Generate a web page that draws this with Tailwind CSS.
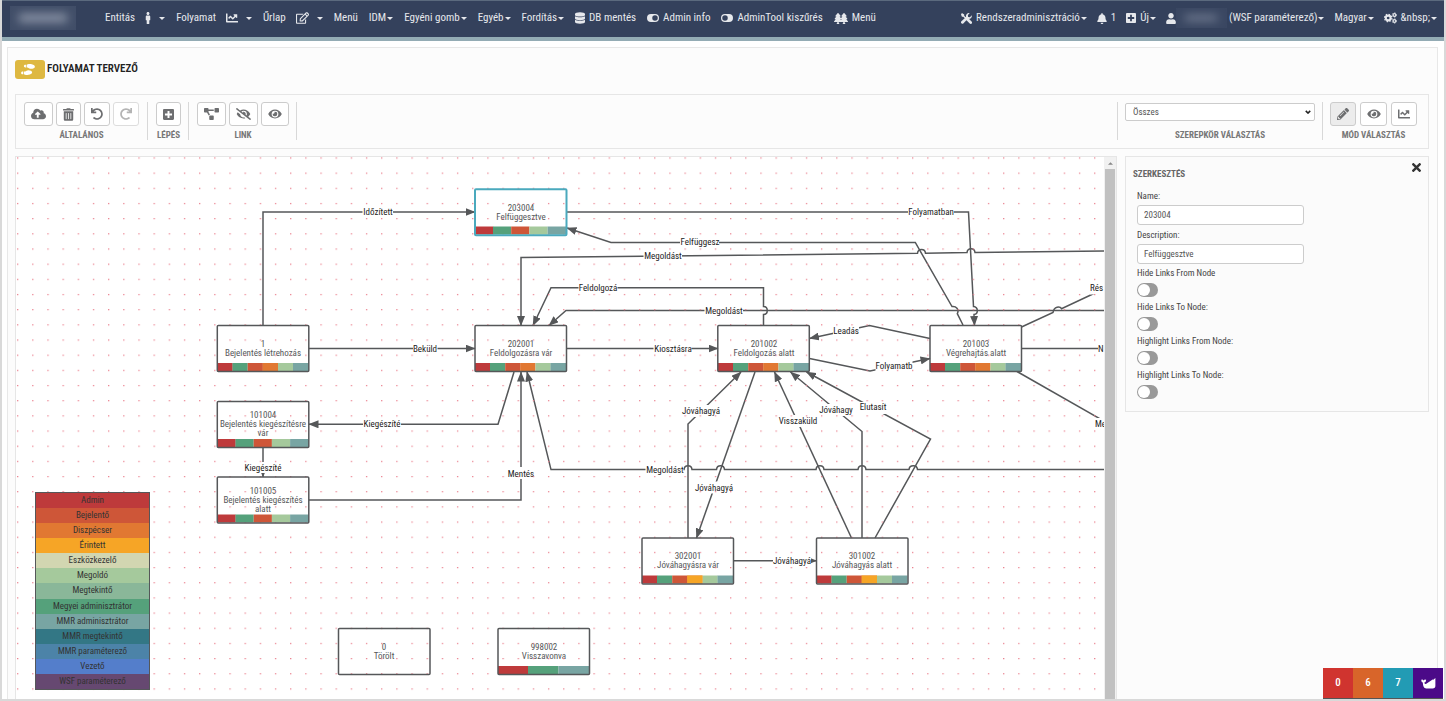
<!DOCTYPE html>
<html lang="hu">
<head>
<meta charset="utf-8">
<title>Folyamat tervező</title>
<script src="https://cdn.jsdelivr.net/npm/@tailwindcss/browser@4"></script>
</head>
<body class="flex h-screen flex-col overflow-hidden border-x-2 border-b-2 border-[#d9d9d9] bg-white font-['Roboto_Condensed','Liberation_Sans_Narrow',Roboto,sans-serif] text-[#555]">

<!-- Shared icon shapes -->
<svg class="hidden" aria-hidden="true">
  <symbol id="i-cloud" viewBox="0 0 640 512"><path d="M537.6 226.6c4.1-10.7 6.4-22.4 6.4-34.6 0-53-43-96-96-96-19.7 0-38.1 6-53.3 16.2C367 64.2 315.3 32 256 32c-88.4 0-160 71.6-160 160 0 2.7.1 5.4.2 8.1C40.2 219.8 0 273.2 0 336c0 79.5 64.5 144 144 144h368c70.7 0 128-57.3 128-128 0-61.9-44-113.6-102.4-125.4zM393.4 288H328v112c0 8.8-7.2 16-16 16h-48c-8.8 0-16-7.2-16-16V288h-65.4c-14.3 0-21.4-17.2-11.3-27.3l105.4-105.4c6.2-6.2 16.4-6.2 22.6 0l105.4 105.4c10.1 10.1 2.9 27.3-11.3 27.3z"/></symbol>
  <symbol id="i-trash" viewBox="0 0 448 512"><path d="M32 464a48 48 0 0 0 48 48h288a48 48 0 0 0 48-48V128H32zm272-256a16 16 0 0 1 32 0v224a16 16 0 0 1-32 0zm-96 0a16 16 0 0 1 32 0v224a16 16 0 0 1-32 0zm-96 0a16 16 0 0 1 32 0v224a16 16 0 0 1-32 0zM432 32H312l-9.4-18.7A24 24 0 0 0 281.1 0H166.8a23.72 23.72 0 0 0-21.4 13.3L136 32H16A16 16 0 0 0 0 48v32a16 16 0 0 0 16 16h416a16 16 0 0 0 16-16V48a16 16 0 0 0-16-16z"/></symbol>
  <symbol id="i-undo" viewBox="0 0 512 512"><path d="M212.333 224.333H12c-6.627 0-12-5.373-12-12V12C0 5.373 5.373 0 12 0h48c6.627 0 12 5.373 12 12v78.112C117.773 39.279 184.26 7.47 258.175 8.007c136.906.994 246.448 111.623 246.157 248.532C504.041 393.258 393.12 504 256.333 504c-64.089 0-122.496-24.313-166.51-64.215-5.099-4.622-5.334-12.554-.467-17.42l33.967-33.967c4.474-4.474 11.662-4.717 16.401-.525C170.76 415.336 211.58 432 256.333 432c97.268 0 176-78.716 176-176 0-97.267-78.716-176-176-176-58.496 0-110.28 28.476-142.274 72.333h98.274c6.627 0 12 5.373 12 12v48c0 6.627-5.373 12-12 12z"/></symbol>
  <symbol id="i-plus" viewBox="0 0 448 512"><path d="M400 32H48C21.5 32 0 53.5 0 80v352c0 26.5 21.5 48 48 48h352c26.5 0 48-21.5 48-48V80c0-26.5-21.5-48-48-48zm-32 252c0 6.6-5.4 12-12 12h-92v92c0 6.6-5.4 12-12 12h-56c-6.6 0-12-5.4-12-12v-92H92c-6.6 0-12-5.4-12-12v-56c0-6.6 5.4-12 12-12h92v-92c0-6.6 5.4-12 12-12h56c6.6 0 12 5.4 12 12v92h92c6.6 0 12 5.4 12 12v56z"/></symbol>
  <symbol id="i-diagram" viewBox="0 0 640 512"><path d="M384 320H256c-17.67 0-32 14.33-32 32v128c0 17.67 14.33 32 32 32h128c17.67 0 32-14.33 32-32V352c0-17.67-14.33-32-32-32zM192 32c0-17.67-14.33-32-32-32H32C14.33 0 0 14.33 0 32v128c0 17.67 14.33 32 32 32h95.72l73.16 128.04C211.98 300.98 232.4 288 256 288h.28L192 175.51V128h224V64H192V32zM608 0H480c-17.67 0-32 14.33-32 32v128c0 17.67 14.33 32 32 32h128c17.67 0 32-14.33 32-32V32c0-17.67-14.33-32-32-32z"/></symbol>
  <symbol id="i-eye" viewBox="0 0 576 512"><path d="M572.52 241.4C518.29 135.59 410.93 64 288 64S57.68 135.64 3.48 241.41a32.35 32.35 0 0 0 0 29.19C57.71 376.41 165.07 448 288 448s230.32-71.64 284.52-177.41a32.35 32.35 0 0 0 0-29.19zM288 400a144 144 0 1 1 144-144 143.93 143.93 0 0 1-144 144zm0-240a95.31 95.31 0 0 0-25.31 3.79 47.85 47.85 0 0 1-66.9 66.9A95.78 95.78 0 1 0 288 160z"/></symbol>
  <symbol id="i-eye-slash" viewBox="0 0 640 512"><path d="M320 400c-75.85 0-137.25-58.71-142.9-133.11L72.2 185.82c-13.79 17.3-26.48 35.59-36.72 55.59a32.35 32.35 0 0 0 0 29.19C89.71 376.41 197.07 448 320 448c26.91 0 52.87-4 77.89-10.46L346 397.39a144.13 144.13 0 0 1-26 2.61zm313.82 58.1l-110.55-85.44a331.25 331.25 0 0 0 81.25-102.07 32.35 32.35 0 0 0 0-29.19C550.29 135.59 442.93 64 320 64a308.15 308.15 0 0 0-147.32 37.7L45.46 3.37A16 16 0 0 0 23 6.18L3.37 31.45A16 16 0 0 0 6.18 53.9l588.36 454.73a16 16 0 0 0 22.46-2.81l19.64-25.27a16 16 0 0 0-2.82-22.45zm-183.72-142l-39.3-30.38A94.75 94.75 0 0 0 416 256a94.76 94.76 0 0 0-121.31-92.21A47.65 47.65 0 0 1 304 192a46.64 46.64 0 0 1-1.54 10l-73.61-56.89A142.31 142.31 0 0 1 320 112a143.92 143.92 0 0 1 144 144c0 21.63-5.29 41.79-13.9 60.11z"/></symbol>
  <symbol id="i-pencil" viewBox="0 0 512 512"><path d="M497.9 142.1l-46.1 46.1c-4.7 4.7-12.3 4.7-17 0l-111-111c-4.7-4.7-4.7-12.3 0-17l46.1-46.1c18.7-18.7 49.1-18.7 67.9 0l60.1 60.1c18.8 18.7 18.8 49.1 0 67.9zM284.2 99.8L21.6 362.4.4 483.9c-2.9 16.4 11.4 30.6 27.8 27.8l121.5-21.3 262.6-262.6c4.7-4.7 4.7-12.3 0-17l-111-111c-4.8-4.7-12.4-4.7-17.1 0zM124.1 339.9c-5.5-5.5-5.5-14.3 0-19.8l154-154c5.5-5.5 14.3-5.5 19.8 0s5.5 14.3 0 19.8l-154 154c-5.5 5.5-14.3 5.5-19.8 0zM88 424h48v36.3l-64.5 11.3-31.1-31.1L51.7 376H88v48z"/></symbol>
  <symbol id="i-chart" viewBox="0 0 512 512"><path d="M496 384H64V80c0-8.84-7.16-16-16-16H16C7.16 64 0 71.16 0 80v336c0 17.67 14.33 32 32 32h464c8.84 0 16-7.16 16-16v-32c0-8.84-7.16-16-16-16zM464 96H345.94c-21.38 0-32.09 25.85-16.97 40.97l32.4 32.4L288 242.75l-73.37-73.37c-12.5-12.5-32.76-12.5-45.25 0l-68.69 68.69c-6.25 6.25-6.25 16.38 0 22.63l22.62 22.62c6.25 6.25 16.38 6.25 22.63 0L192 237.25l73.37 73.37c12.5 12.5 32.76 12.5 45.25 0l96-96 32.4 32.4c15.12 15.12 40.97 4.41 40.97-16.97V112c.01-8.84-7.15-16-15.99-16z"/></symbol>
  <symbol id="i-times" viewBox="0 80 352 352"><path d="M242.72 256l100.07-100.07c12.28-12.28 12.28-32.19 0-44.48l-22.24-22.24c-12.28-12.28-32.19-12.28-44.48 0L176 189.28 75.93 89.21c-12.28-12.28-32.19-12.28-44.48 0L9.21 111.45c-12.28 12.28-12.28 32.19 0 44.48L109.28 256 9.21 356.07c-12.28 12.28-12.28 32.19 0 44.48l22.24 22.24c12.28 12.28 32.2 12.28 44.48 0L176 322.72l100.07 100.07c12.28 12.28 32.2 12.28 44.48 0l22.24-22.24c12.28-12.28 12.28-32.19 0-44.48L242.72 256z"/></symbol>
  <symbol id="i-male" viewBox="0 0 192 512"><path d="M96 0c35.346 0 64 28.654 64 64s-28.654 64-64 64-64-28.654-64-64S60.654 0 96 0m48 144h-11.36c-22.711 10.443-49.59 10.894-73.28 0H48c-26.51 0-48 21.49-48 48v136c0 13.255 10.745 24 24 24h16v136c0 13.255 10.745 24 24 24h64c13.255 0 24-10.745 24-24V352h16c13.255 0 24-10.745 24-24V192c0-26.51-21.49-48-48-48z"/></symbol>
  <symbol id="i-edit" viewBox="0 0 576 512"><path d="M402.3 344.9l32-32c5-5 13.7-1.5 13.7 5.7V464c0 26.5-21.5 48-48 48H48c-26.5 0-48-21.5-48-48V112c0-26.5 21.5-48 48-48h273.5c7.1 0 10.7 8.6 5.7 13.7l-32 32c-1.5 1.5-3.5 2.3-5.7 2.3H48v352h352V350.5c0-2.1.8-4.1 2.3-5.6zm156.6-201.8L296.3 405.7l-90.4 10c-26.2 2.9-48.5-19.2-45.6-45.6l10-90.4L432.9 17.1c22.9-22.9 59.9-22.9 82.7 0l43.2 43.2c22.9 22.9 22.9 60 .1 82.8zM460.1 174L402 115.9 216.2 301.8l-7.3 65.3 65.3-7.3L460.1 174zm64.8-79.7l-43.2-43.2c-4.1-4.1-10.8-4.1-14.8 0L436 82l58.1 58.1 30.9-30.9c4-4.2 4-10.8-.1-14.9z"/></symbol>
  <symbol id="i-db" viewBox="0 0 448 512"><path d="M448 73.143v45.714C448 159.143 347.667 192 224 192S0 159.143 0 118.857V73.143C0 32.857 100.333 0 224 0s224 32.857 224 73.143zM448 176v102.857C448 319.143 347.667 352 224 352S0 319.143 0 278.857V176c48.125 33.143 136.208 48.572 224 48.572S399.874 209.143 448 176zm0 160v102.857C448 479.143 347.667 512 224 512S0 479.143 0 438.857V336c48.125 33.143 136.208 48.572 224 48.572S399.874 369.143 448 336z"/></symbol>
  <symbol id="i-toggle" viewBox="0 0 24 16"><path fill-rule="evenodd" d="M8 0h8a8 8 0 0 1 0 16H8A8 8 0 0 1 8 0zm8 2.5a5.5 5.5 0 1 0 0 11 5.5 5.5 0 0 0 0-11z"/></symbol>
  <symbol id="i-tree" viewBox="0 0 384 512" preserveAspectRatio="none"><path d="M378.31 378.49L298.42 288h30.63c9.01 0 16.98-5 20.78-13.06 3.8-8.04 2.55-17.26-3.28-24.05L268.42 160h28.89c9.1 0 17.3-5.35 20.86-13.61 3.52-8.13 1.86-17.59-4.24-24.08L203.66 4.83c-6.03-6.45-17.28-6.45-23.32 0L70.06 122.31c-6.1 6.49-7.75 15.95-4.24 24.08C69.38 154.65 77.59 160 86.69 160h28.89l-78.14 90.91c-5.81 6.78-7.06 15.99-3.27 24.04C37.97 283 45.93 288 54.95 288h30.63L5.69 378.49c-6 6.79-7.36 16.09-3.56 24.26 3.75 8.05 12 13.25 21.01 13.25H160v24.45l-30.29 48.4c-5.32 10.64 2.42 23.16 14.31 23.16h95.96c11.89 0 19.63-12.52 14.31-23.16L224 440.45V416h136.86c9.01 0 17.26-5.2 21.01-13.25 3.8-8.17 2.44-17.47-3.56-24.26z"/></symbol>
  <symbol id="i-bell" viewBox="0 0 448 512"><path d="M224 512c35.32 0 63.97-28.65 63.97-64H160.03c0 35.35 28.65 64 63.97 64zm215.39-149.71c-19.32-20.76-55.47-51.99-55.47-154.29 0-77.7-54.48-139.9-127.94-155.16V32c0-17.67-14.32-32-31.98-32s-31.98 14.33-31.98 32v20.84C118.56 68.1 64.08 130.3 64.08 208c0 102.3-36.15 133.53-55.47 154.29-6 6.45-8.66 14.16-8.61 21.71.11 16.4 12.98 32 32.1 32h383.8c19.12 0 32-15.6 32.1-32 .05-7.55-2.61-15.27-8.61-21.71z"/></symbol>
  <symbol id="i-user" viewBox="0 0 448 512"><path d="M224 256c70.7 0 128-57.3 128-128S294.7 0 224 0 96 57.3 96 128s57.3 128 128 128zm89.6 32h-16.7c-22.2 10.2-46.9 16-72.9 16s-50.6-5.8-72.9-16h-16.7C60.2 288 0 348.2 0 422.4V464c0 26.5 21.5 48 48 48h352c26.5 0 48-21.5 48-48v-41.6c0-74.2-60.2-134.4-134.4-134.4z"/></symbol>
  <symbol id="i-shoe" viewBox="0 0 640 512"><path d="M192 160h32V32h-32c-35.35 0-64 28.65-64 64s28.65 64 64 64zM0 416c0 35.35 28.65 64 64 64h32V352H64c-35.35 0-64 28.65-64 64zm337.46-128c-34.91 0-76.16 13.12-104.73 32-24.79 16.38-44.52 32-104.73 32v128l57.53 15.97c26.21 7.28 53.01 13.12 80.31 15.05 32.69 2.31 65.6.67 97.58-6.2C472.9 481.3 512 429.22 512 384c0-64-84.18-96-174.54-96zM491.42 7.25C459.44.38 426.53-1.26 393.84 1.05c-27.3 1.93-54.1 7.77-80.31 15.04L256 32v128c60.2 0 79.94 15.62 104.73 32 28.57 18.88 69.82 32 104.73 32C555.82 224 640 192 640 128c0-45.22-39.1-97.3-148.58-120.75z"/></symbol>
  <symbol id="i-tools" viewBox="0 0 24 24"><path d="M2 0l5 3v3l4.500 4.500-2 2L5 8H2L0 3zM13 13l3-1.500 7 7a2.800 2.800 0 0 1-4 4.500l-7-7zM23.500 5a6.500 6.500 0 0 1-8.500 7.500L5.500 22.500a3 3 0 0 1-4.500-4.500L11 8.500A6.500 6.500 0 0 1 19 .5l-4 4 .5 4 4 .5z"/></symbol>
  <symbol id="i-cogs" viewBox="0 0 28 24"><g fill="none" stroke="currentColor"><circle cx="9" cy="12" r="5.200" stroke-width="4.500"/><circle cx="9" cy="12" r="8" stroke-width="2.600" stroke-dasharray="3.140 3.140"/><circle cx="22.500" cy="5.500" r="3" stroke-width="2.600"/><circle cx="22.500" cy="5.500" r="4.800" stroke-width="1.600" stroke-dasharray="2.510 2.510"/><circle cx="22.500" cy="18.500" r="3" stroke-width="2.600"/><circle cx="22.500" cy="18.500" r="4.800" stroke-width="1.600" stroke-dasharray="2.510 2.510"/></g></symbol>
  <symbol id="i-whale" viewBox="0 0 16 12"><path d="M0 2l1.500-.3L2.700 2.700 3.900 1.700 5.500 2 4.800 4.300 3.500 5C3.500 6 4 6.800 5.200 6.500L12.500 1.500 13.300 2 15.500 0v8.500A3 3 0 0 1 12.500 11.500H5.500C3 11.500 2 9 1.800 5L.6 4.300z"/></symbol>
  <symbol id="i-caret" viewBox="0 0 6 3"><path d="M0 0h6L3 3z"/></symbol>
</svg>

<header class="flex h-[41px] shrink-0 items-center justify-between border-t border-b-4 border-t-[#5b6a7e] border-b-[#93abb4] bg-[#34415c] pr-[7px] pb-0.5 text-[11px] whitespace-nowrap text-[#e6e8ec]">
  <nav class="flex items-center gap-[11px]" aria-label="Főmenü">
    <a href="#" aria-label="Kezdőlap" class="mr-[18px] ml-2 flex h-6 w-[66px] items-center justify-center overflow-hidden bg-[#414e68]"><span class="h-2 w-12 bg-[#8f98aa] blur-[5px]"></span></a>
    <a href="#" class="flex items-center">Entitás<svg class="ml-[10px] h-[12px] w-[6px] fill-current"><use href="#i-male"/></svg><svg class="ml-2 h-[3px] w-[6px] fill-current"><use href="#i-caret"/></svg></a>
    <a href="#" class="flex items-center">Folyamat<svg class="ml-[10px] size-[12px] fill-current"><use href="#i-chart"/></svg><svg class="ml-2 h-[3px] w-[6px] fill-current"><use href="#i-caret"/></svg></a>
    <a href="#" class="flex items-center">Űrlap<svg class="ml-[10px] h-[12px] w-[13px] fill-current"><use href="#i-edit"/></svg><svg class="ml-2 h-[3px] w-[6px] fill-current"><use href="#i-caret"/></svg></a>
    <a href="#">Menü</a>
    <a href="#" class="flex items-center gap-px">IDM<svg class="h-[3px] w-[6px] fill-current"><use href="#i-caret"/></svg></a>
    <a href="#" class="flex items-center gap-px">Egyéni gomb<svg class="h-[3px] w-[6px] fill-current"><use href="#i-caret"/></svg></a>
    <a href="#" class="flex items-center gap-px">Egyéb<svg class="h-[3px] w-[6px] fill-current"><use href="#i-caret"/></svg></a>
    <a href="#" class="flex items-center gap-px">Fordítás<svg class="h-[3px] w-[6px] fill-current"><use href="#i-caret"/></svg></a>
    <a href="#" class="flex items-center gap-1"><svg class="h-[12px] w-[10px] fill-current"><use href="#i-db"/></svg>DB mentés</a>
    <a href="#" class="flex items-center gap-1"><svg class="h-[8px] w-[12px] fill-current"><use href="#i-toggle"/></svg>Admin info</a>
    <a href="#" class="flex items-center gap-1"><svg class="h-[8px] w-[12px] fill-current" viewBox="0 0 24 16"><path fill-rule="evenodd" d="M8 0h8a8 8 0 0 1 0 16H8A8 8 0 0 1 8 0zm0 2.500a5.500 5.500 0 1 0 0 11 5.500 5.500 0 0 0 0-11z"/></svg>AdminTool kiszűrés</a>
    <a href="#" class="flex items-center gap-1"><svg class="h-[11px] w-[14px] fill-current" viewBox="0 0 14 11"><use href="#i-tree" width="8" height="11"/><use href="#i-tree" x="6" width="8" height="11"/></svg>Menü</a>
  </nav>
  <nav class="flex items-center gap-[10px]" aria-label="Felhasználói menü">
    <a href="#" class="flex items-center"><svg class="mr-1 size-[11px] fill-current"><use href="#i-tools"/></svg>Rendszeradminisztráció<svg class="ml-px h-[3px] w-[6px] fill-current"><use href="#i-caret"/></svg></a>
    <a href="#" class="flex items-center gap-1"><svg class="h-[11px] w-[10px] fill-current"><use href="#i-bell"/></svg>1</a>
    <a href="#" class="flex items-center"><svg class="mr-1 h-[12px] w-[10px] fill-current"><use href="#i-plus"/></svg>Új<svg class="ml-px h-[3px] w-[6px] fill-current"><use href="#i-caret"/></svg></a>
    <a href="#" class="flex items-center"><svg class="h-[11px] w-[10px] fill-current"><use href="#i-user"/></svg><span class="mr-0.5 flex h-5 w-[51px] items-center justify-center overflow-hidden bg-[#3a4762]"><span class="h-1 w-8 bg-[#8f98aa] blur-[5px]"></span></span>(WSF paraméterező)<svg class="ml-px h-[3px] w-[6px] fill-current"><use href="#i-caret"/></svg></a>
    <a href="#" class="flex items-center gap-px">Magyar<svg class="h-[3px] w-[6px] fill-current"><use href="#i-caret"/></svg></a>
    <a href="#" class="flex items-center"><svg class="mr-1 h-[12px] w-[13px] fill-current"><use href="#i-cogs"/></svg>&amp;nbsp;<svg class="ml-px h-[3px] w-[6px] fill-current"><use href="#i-caret"/></svg></a>
  </nav>
</header>

<main class="mr-[6px] ml-[5px] mt-1.5 flex min-h-0 flex-1 flex-col border border-b-0 border-[#e8e8e8] bg-[#fcfcfc] pr-2 pl-[7px] pt-[11px]">
  <h1 class="flex h-5 items-center gap-0.5 text-[11px] font-semibold text-[#222]">
    <span class="flex h-[19px] w-[30px] items-center rounded-[3px] bg-[#deb841] pl-[6px]"><svg class="h-[11px] w-[14px] fill-white"><use href="#i-shoe"/></svg></span>FOLYAMAT TERVEZŐ
  </h1>

  <div class="mt-[15px] flex h-[55px] shrink-0 items-start justify-between border border-[#e6e6e6] py-[7px] pr-[11px] pl-2 text-[9px] font-bold text-[#777]">
    <div class="flex">
      <div class="flex h-[38px] flex-col items-center justify-between border-r border-[#d8d8d8] pr-2">
        <div class="flex gap-[3px]">
          <button aria-label="Mentés" class="flex h-6 w-[29px] items-center justify-center rounded-[3px] border border-[#ccc] bg-white"><svg class="h-[12px] w-[15px] fill-[#6d6e70]"><use href="#i-cloud"/></svg></button>
          <button aria-label="Törlés" class="flex h-6 w-[25px] items-center justify-center rounded-[3px] border border-[#ccc] bg-white"><svg class="h-[13px] w-[11px] fill-[#6d6e70]"><use href="#i-trash"/></svg></button>
          <button aria-label="Visszavonás" class="flex h-6 w-[26px] items-center justify-center rounded-[3px] border border-[#ccc] bg-white"><svg class="size-[12px] fill-[#6d6e70]"><use href="#i-undo"/></svg></button>
          <button aria-label="Mégis" disabled class="flex h-6 w-[26px] items-center justify-center rounded-[3px] border border-[#ddd] bg-white"><svg class="size-[12px] -scale-x-100 fill-[#b4b4b4]"><use href="#i-undo"/></svg></button>
        </div>
        <span class="leading-[10px]">ÁLTALÁNOS</span>
      </div>
      <div class="flex h-[38px] flex-col items-center justify-between border-r border-[#d8d8d8] pr-[7px] pl-2">
        <button aria-label="Új lépés" class="flex h-6 w-[25px] items-center justify-center rounded-[3px] border border-[#ccc] bg-white"><svg class="h-[13px] w-[11px] fill-[#6d6e70]"><use href="#i-plus"/></svg></button>
        <span class="leading-[10px]">LÉPÉS</span>
      </div>
      <div class="flex h-[38px] flex-col items-center justify-between border-r border-[#d8d8d8] pr-[7px] pl-2">
        <div class="flex gap-[3px]">
          <button aria-label="Linkek" class="flex h-6 w-[29px] items-center justify-center rounded-[3px] border border-[#ccc] bg-white"><svg class="h-[12px] w-[15px] fill-[#6d6e70]"><use href="#i-diagram"/></svg></button>
          <button aria-label="Linkek elrejtése" class="flex h-6 w-[29px] items-center justify-center rounded-[3px] border border-[#ccc] bg-white"><svg class="h-[12px] w-[15px] fill-[#6d6e70]"><use href="#i-eye-slash"/></svg></button>
          <button aria-label="Linkek mutatása" class="flex h-6 w-[28px] items-center justify-center rounded-[3px] border border-[#ccc] bg-white"><svg class="h-[12px] w-[14px] fill-[#6d6e70]"><use href="#i-eye"/></svg></button>
        </div>
        <span class="leading-[10px]">LINK</span>
      </div>
    </div>
    <div class="flex">
      <div class="flex h-[38px] flex-col items-center justify-between border-l border-[#d8d8d8] px-[7px]">
        <div class="relative mt-px">
          <select id="role" class="h-[18px] w-[190px] appearance-none rounded-[2px] border border-[#ccc] bg-white px-[7px] text-[9px] leading-[16px] font-normal text-[#555]"><option>Összes</option></select>
          <svg class="pointer-events-none absolute top-[7px] right-1 h-[4px] w-[6px] fill-none stroke-[#222] stroke-2" viewBox="0 0 8 5"><path d="M1 1l3 3 3-3"/></svg>
        </div>
        <label for="role" class="leading-[10px]">SZEREPKÖR VÁLASZTÁS</label>
      </div>
      <div class="flex h-[38px] flex-col items-center justify-between border-l border-[#d8d8d8] pl-[7px]">
        <div class="flex gap-1">
          <button aria-label="Szerkesztés mód" aria-pressed="true" class="flex h-6 w-[26px] items-center justify-center rounded-[3px] border border-[#ccc] bg-[#ececec]"><svg class="size-[12px] fill-[#6d6e70]"><use href="#i-pencil"/></svg></button>
          <button aria-label="Megtekintés mód" class="flex h-6 w-[27px] items-center justify-center rounded-[3px] border border-[#ccc] bg-white"><svg class="h-[12px] w-[14px] fill-[#6d6e70]"><use href="#i-eye"/></svg></button>
          <button aria-label="Statisztika mód" class="flex h-6 w-[26px] items-center justify-center rounded-[3px] border border-[#ccc] bg-white"><svg class="size-[12px] fill-[#6d6e70]"><use href="#i-chart"/></svg></button>
        </div>
        <span class="leading-[10px]">MÓD VÁLASZTÁS</span>
      </div>
    </div>
  </div>

  <div class="mt-[7px] flex min-h-0 flex-1 items-start gap-2">
    <section aria-label="Folyamatábra" class="flex h-full min-w-0 flex-1 overflow-hidden border border-b-0 border-[#e6e6e6] bg-white">
      <div class="relative h-full min-w-0 flex-1 overflow-hidden">
        <svg class="absolute inset-0 h-full w-full">
          <defs>
            <pattern id="dots" width="15.170" height="15.170" patternUnits="userSpaceOnUse" x="17" y="157.400"><rect width="1.300" height="1.200" fill="#ea7f8d"/></pattern>
            <marker id="arrow" markerUnits="userSpaceOnUse" markerWidth="10" markerHeight="8" refX="9.500" refY="4" orient="auto"><path d="M0 0L10 4 0 8z" fill="#555759"/></marker>
            <g id="s6"><path fill="#be3a3b" d="M0 37.500h15.200v8H0z"/><path fill="#55a17b" d="M15 37.500h15.200v8H15z"/><path fill="#ce5638" d="M30.200 37.500h15.200v8H30.200z"/><path fill="#e17832" d="M45.200 37.500h15.300v8H45.200z"/><path fill="#a5c99c" d="M60.500 37.500h15.200v8H60.500z"/><path fill="#78a5a3" d="M75.500 37.500H91v8H75.500z"/></g>
            <g id="s6y"><use href="#s6"/><path fill="#f6a526" d="M45.200 37.500h15.300v8H45.200z"/></g>
            <g id="s5"><path fill="#be3a3b" d="M0 37.500h18.200v8H0z"/><path fill="#55a17b" d="M18 37.500h18.200v8H18z"/><path fill="#ce5638" d="M36.200 37.500h18.200v8H36.200z"/><path fill="#a5c99c" d="M54.400 37.500h18.200v8H54.400z"/><path fill="#78a5a3" d="M72.600 37.500H91v8H72.600z"/></g>
            <g id="s3"><path fill="#be3a3b" d="M0 37.500h30v8H0z"/><path fill="#55a17b" d="M30 37.500h30.500v8H30z"/><path fill="#78a5a3" d="M60.500 37.500H91v8H60.500z"/></g>
            <rect id="box" width="91.500" height="46" rx="1"/>
          </defs>
          <!-- Diagram coordinates start at 16,157 -->
          <g transform="translate(-16 -157)">
            <g fill="none" stroke="#555759" stroke-width="1.500">
              <path marker-end="url(#arrow)" d="M263 325V212H475"/>
              <path marker-end="url(#arrow)" d="M567 212H968.500L973.500 306.500C978.500 307 978.500 314 974 314.500L974.500 325.500"/>
              <path marker-end="url(#arrow)" d="M963 325L957.300 313.700C959.500 309 956 306 952 306.500L915.300 242.500H611L567 228"/>
              <path marker-end="url(#arrow)" d="M1104 251L975 252.500C974.500 247.500 967.500 247.500 967 252.600L925.500 253.200C925 248.200 918 248.200 917.500 253.300L521 257.500V325.500"/>
              <path marker-end="url(#arrow)" d="M763.500 325V314.500C768.500 314.500 768.500 306.500 763.500 306.500V287.700H551L533 325.500"/>
              <path marker-end="url(#arrow)" d="M1104 310.500H566L549 325.500"/>
              <path marker-end="url(#arrow)" d="M309 348.500H475"/>
              <path marker-end="url(#arrow)" d="M567 348.500H718"/>
              <path marker-end="url(#arrow)" d="M930 338.500L869.500 325.500 809.500 338.500"/>
              <path marker-end="url(#arrow)" d="M809.500 358.500L870 371 930 358.500"/>
              <path d="M1021.500 327L1053 312.500C1054 306 1060 306 1061.500 308.700L1095 293"/>
              <path d="M1022 348.500H1104"/>
              <path d="M1017 371.500L1104 421"/>
              <path marker-end="url(#arrow)" d="M514 372L498 424.300H309"/>
              <path marker-end="url(#arrow)" d="M263 447.500V477"/>
              <path marker-end="url(#arrow)" d="M309 500H521V372"/>
              <path marker-end="url(#arrow)" d="M1104 469.600H917.500C917 464.600 909.500 464.600 909 469.600H866C865.500 464.600 858.500 464.600 858 469.600H824C823.500 464.600 816.500 464.600 816 469.600H724.500C724 464.600 717 464.600 716.500 469.600H692C691.500 464.600 684.500 464.600 684 469.600H551L527 372"/>
              <path marker-end="url(#arrow)" d="M688 538V424L741 372"/>
              <path marker-end="url(#arrow)" d="M755 372L696.500 538"/>
              <path marker-end="url(#arrow)" d="M734 560.700H816.500"/>
              <path marker-end="url(#arrow)" d="M851.500 538L774.500 372"/>
              <path marker-end="url(#arrow)" d="M862 538V431.500L790.500 372"/>
              <path marker-end="url(#arrow)" d="M875 538L930.500 439 806.500 372"/>
            </g>

            <!-- Gaps in the links behind their labels -->
            <path fill="#fff" d="M362.500 206h30.500v12h-30.500zM908 206h46v12h-46zM680 236.500h39v12h-39zM643.500 250h38.500v12h-38.500zM578.500 282h39v12h-39zM704.500 304.500h38.500v12h-38.500zM413 342.500h24.500v12H413zM653.500 342.500H691.500v12H653.500zM833 325.500h26v12h-26zM875.500 360h37v12h-37zM1090 282.500h20v12h-20zM1098 342.500h10v12h-10zM1095 418h10v12h-10zM363 418h38v12h-38zM245 462h36v11h-36zM507.500 467h27v12h-27zM645.500 463.500h38v12h-38zM682 405h38v12h-38zM695 481.500h38v12h-38zM773 554.500h38v12h-38zM778 415h39v12h-39zM819 404h34v12h-34zM859 402h27v12h-27z"/>
            <g class="fill-[#222] text-[9px]" text-anchor="middle">
              <text x="378" y="215">Időzített</text><text x="931" y="215">Folyamatban</text><text x="700" y="245">Felfüggesz</text>
              <text x="663" y="259">Megoldást</text><text x="598" y="291">Feldolgozá</text><text x="724" y="314">Megoldást</text>
              <text x="425" y="352">Beküld</text><text x="673" y="352">Kiosztásra</text><text x="846" y="334">Leadás</text>
              <text x="894" y="369">Folyamatb</text><text x="382" y="427">Kiegészíté</text><text x="263" y="471">Kiegészíté</text>
              <text x="521" y="477">Mentés</text><text x="665" y="473">Megoldást</text><text x="701" y="414">Jóváhagyá</text>
              <text x="714" y="491">Jóváhagyá</text><text x="792" y="564">Jóváhagyá</text><text x="798" y="424">Visszaküld</text>
              <text x="836" y="413">Jóváhagy</text><text x="873" y="410">Elutasít</text>
              <text x="1090" y="291" text-anchor="start">Rés</text><text x="1098" y="352" text-anchor="start">N</text><text x="1095" y="427" text-anchor="start">Me</text>
            </g>

            <g class="fill-[#555759] text-[9px]" text-anchor="middle">
              <text x="263" y="347">1</text><text x="263" y="356">Bejelentés létrehozás</text>
              <text x="521" y="211">203004</text><text x="521" y="220">Felfüggesztve</text>
              <text x="521" y="347">202001</text><text x="521" y="356">Feldolgozásra vár</text>
              <text x="764" y="347">201002</text><text x="764" y="356">Feldolgozás alatt</text>
              <text x="976" y="347">201003</text><text x="976" y="356">Végrehajtás alatt</text>
              <text x="263" y="418">101004</text><text x="263" y="427">Bejelentés kiegészítésre</text><text x="263" y="436">vár</text>
              <text x="263" y="494">101005</text><text x="263" y="503">Bejelentés kiegészítés</text><text x="263" y="512">alatt</text>
              <text x="688" y="559">302001</text><text x="688" y="568">Jóváhagyásra vár</text>
              <text x="862" y="559">301002</text><text x="862" y="568">Jóváhagyás alatt</text>
              <text x="384" y="650">0</text><text x="384" y="659">Törölt</text>
              <text x="544" y="650">998002</text><text x="544" y="659">Visszavonva</text>
            </g>
            <rect x="16" y="157" width="1088" height="560" fill="url(#dots)"/>
            <use href="#s6" x="217.500" y="325.500"/><use href="#s5" x="475" y="189"/><use href="#s6" x="475" y="325.500"/><use href="#s6" x="718" y="325.500"/><use href="#s6" x="930" y="325.500"/><use href="#s5" x="217.500" y="401.500"/><use href="#s5" x="217.500" y="477"/><use href="#s6y" x="642" y="538"/><use href="#s6y" x="816.500" y="538"/><use href="#s3" x="498" y="628.500"/>
            <g fill="none" stroke="#555759" stroke-width="1.500">
              <use href="#box" x="217.300" y="325.500"/><use href="#box" x="475" y="325.500"/><use href="#box" x="717.800" y="325.500"/><use href="#box" x="930" y="325.500"/><use href="#box" x="217.300" y="401.500"/><use href="#box" x="217.300" y="477"/><use href="#box" x="642" y="538"/><use href="#box" x="816.500" y="538"/><use href="#box" x="338.500" y="628.500"/><use href="#box" x="498" y="628.500"/>
            </g>
            <use href="#box" x="475" y="189.200" fill="none" stroke="#4aa9bd" stroke-width="2"/>
          </g>
        </svg>
        <ul class="absolute top-[335px] left-[19px] grid h-[198px] w-[115px] auto-rows-fr border border-[#555759] text-center text-[9px] leading-[14px] text-[#333]">
          <li class="bg-[#be3a3b]">Admin</li>
          <li class="bg-[#ce5638]">Bejelentő</li>
          <li class="bg-[#e17832]">Diszpécser</li>
          <li class="bg-[#f6a526]">Érintett</li>
          <li class="bg-[#d2d6b1]">Eszközkezelő</li>
          <li class="bg-[#a5c99c]">Megoldó</li>
          <li class="bg-[#8ab799]">Megtekintő</li>
          <li class="bg-[#55a17b]">Megyei adminisztrátor</li>
          <li class="bg-[#78a5a3]">MMR adminisztrátor</li>
          <li class="bg-[#337785]">MMR megtekintő</li>
          <li class="bg-[#4c83a8]">MMR paraméterező</li>
          <li class="bg-[#547ecb]">Vezető</li>
          <li class="bg-[#664871]">WSF paraméterező</li>
        </ul>
      </div>
      <div class="flex h-full w-[12px] flex-col bg-[#f1f1f1] px-px" aria-hidden="true">
        <svg class="mx-auto mt-[5px] mb-1 h-[3px] w-[5px] shrink-0 fill-[#888]" viewBox="0 0 6 3"><path d="M0 3h6L3 0z"/></svg>
        <span class="flex-1 bg-[#c1c1c1]"></span>
      </div>
    </section>

    <aside class="relative h-[256px] w-[304px] shrink-0 border border-[#e6e6e6] bg-[#fbfbfb] px-[7px] pt-[11px] text-[9px] text-[#444]">
      <h2 class="leading-3 font-bold text-[#666]">SZERKESZTÉS</h2>
      <button aria-label="Bezárás" class="absolute top-[5px] right-[6px] p-px"><svg class="size-[9px] fill-[#333]"><use href="#i-times"/></svg></button>
      <form class="mt-[9px] flex flex-col items-start pl-1">
        <label for="name" class="leading-[14px]">Name:</label>
        <input id="name" value="203004" class="mt-[2px] mb-[3px] h-5 w-[167px] rounded-[3px] border border-[#ccc] bg-white px-1.5 text-[9px] text-[#555]">
        <label for="desc" class="leading-[14px]">Description:</label>
        <input id="desc" value="Felfüggesztve" class="mt-[2px] mb-[2px] h-5 w-[167px] rounded-[3px] border border-[#ccc] bg-white px-1.5 text-[9px] text-[#555]">
        <label for="t1" class="leading-[14px]">Hide Links From Node</label>
        <input id="t1" type="checkbox" class="mt-[3px] mb-[3px] h-[14px] w-[21px] appearance-none rounded-full bg-[#999] before:mt-px before:ml-px before:block before:size-[12px] before:rounded-full before:bg-white">
        <label for="t2" class="leading-[14px]">Hide Links To Node:</label>
        <input id="t2" type="checkbox" class="mt-[3px] mb-[3px] h-[14px] w-[21px] appearance-none rounded-full bg-[#999] before:mt-px before:ml-px before:block before:size-[12px] before:rounded-full before:bg-white">
        <label for="t3" class="leading-[14px]">Highlight Links From Node:</label>
        <input id="t3" type="checkbox" class="mt-[3px] mb-[3px] h-[14px] w-[21px] appearance-none rounded-full bg-[#999] before:mt-px before:ml-px before:block before:size-[12px] before:rounded-full before:bg-white">
        <label for="t4" class="leading-[14px]">Highlight Links To Node:</label>
        <input id="t4" type="checkbox" class="mt-[3px] mb-[3px] h-[14px] w-[21px] appearance-none rounded-full bg-[#999] before:mt-px before:ml-px before:block before:size-[12px] before:rounded-full before:bg-white">
      </form>
    </aside>
  </div>
</main>

<div class="fixed right-[3px] bottom-[2px] flex border-b border-[#555] text-[11px] font-medium text-white">
  <button class="h-[30px] w-[30px] bg-[#d0342f]">0</button>
  <button class="h-[30px] w-[30px] bg-[#d8652a]">6</button>
  <button class="h-[30px] w-[30px] bg-[#229bb4]">7</button>
  <button aria-label="Keresés" class="flex h-[30px] w-[30px] items-center justify-center bg-[#4b0a88]"><svg class="h-[11px] w-[15px] fill-white"><use href="#i-whale"/></svg></button>
</div>
</body>
</html>
